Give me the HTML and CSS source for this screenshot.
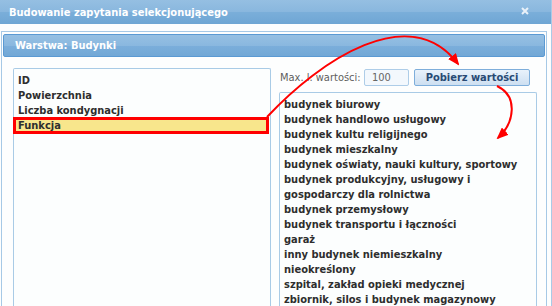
FILE: index.html
```html
<!DOCTYPE html>
<html lang="pl">
<head>
<meta charset="utf-8">
<title>Budowanie zapytania selekcjonującego</title>
<link rel="stylesheet" href="styles.css">
</head>
<body>
<div class="window">
  <div class="titlebar">
    <span class="title">Budowanie zapytania selekcjonującego</span>
    <svg class="close" width="8" height="8" viewBox="0 0 8 8"><path d="M1 1 L7 7 M7 1 L1 7" stroke="#e9f1f9" stroke-width="2"/></svg>
  </div>
  <div class="wbody">
    <div class="panel">
      <div class="phead">Warstwa: Budynki</div>
      <div class="pcontent">
        <div class="listbox">
          <div class="item">ID</div>
          <div class="item">Powierzchnia</div>
          <div class="item">Liczba kondygnacji</div>
          <div class="item sel">Funkcja</div>
        </div>
        <div class="rightcol">
          <div class="toolbar">
            <span class="lbl">Max. l. wartości:</span>
            <input class="num" type="text" value="100">
            <button class="btn">Pobierz wartości</button>
          </div>
          <div class="listbox values">
            <div class="item">budynek biurowy</div>
            <div class="item">budynek handlowo usługowy</div>
            <div class="item">budynek kultu religijnego</div>
            <div class="item">budynek mieszkalny</div>
            <div class="item">budynek oświaty, nauki kultury, sportowy</div>
            <div class="item">budynek produkcyjny, usługowy i gospodarczy dla rolnictwa</div>
            <div class="item">budynek przemysłowy</div>
            <div class="item">budynek transportu i łączności</div>
            <div class="item">garaż</div>
            <div class="item">inny budynek niemieszkalny</div>
            <div class="item">nieokreślony</div>
            <div class="item">szpital, zakład opieki medycznej</div>
            <div class="item">zbiornik, silos i budynek magazynowy</div>
          </div>
        </div>
      </div>
    </div>
  </div>
  <svg class="arrows" width="552" height="306" viewBox="0 0 552 306">
    <defs>
      <marker id="ah" markerUnits="userSpaceOnUse" markerWidth="12" markerHeight="10" refX="10" refY="5" orient="auto">
        <path d="M0 0 L12 5 L0 10 Z" fill="#f00"/>
      </marker>
    </defs>
    <path d="M267 117 C 320 60 410 0 458 64" fill="none" stroke="#f00" stroke-width="2" marker-end="url(#ah)"/>
    <path d="M497 86 C 518 96 515 122 498 138" fill="none" stroke="#f00" stroke-width="2" marker-end="url(#ah)"/>
  </svg>
</div>
</body>
</html>
```
FILE: styles.css
```css
* { box-sizing: border-box; }
html, body { margin: 0; padding: 0; background: #ffffff; }
body { font-family: "DejaVu Sans Condensed", "DejaVu Sans", sans-serif; font-size: 11px; }

.window {
  position: relative;
  width: 552px;
  height: 306px;
  overflow: hidden;
  background: #fdfefe;
  border-right: 1px solid #a9cbe7;
}

.titlebar {
  height: 24px;
  display: flex;
  align-items: center;
  justify-content: space-between;
  padding: 0 22px 0 9px;
  background: linear-gradient(#95bfe2 0%, #89b7de 50%, #7aaed9 52%, #6fa6d4 100%);
}
.title { color: #fff; font-weight: bold; font-size: 11px; }
.close { display: block; margin-top: -2px; }

.wbody { padding: 7px 0 0 1px; }

.panel {
  width: 546px;
  height: 300px;
  border: 1px solid #a6c9e6;
  border-bottom: none;
  padding: 2px 1px 0 1px;
}

.phead {
  height: 23px;
  border: 1px solid #5b9ad3;
  border-radius: 2px;
  padding-left: 11px;
  display: flex;
  align-items: center;
  color: #fff;
  font-weight: bold;
  background: linear-gradient(#96c0e3 0%, #8ab8df 50%, #7baedb 52%, #72a8d6 100%);
}

.pcontent {
  display: grid;
  grid-template-columns: 258px 258px;
  column-gap: 8px;
  padding: 11px 0 0 10px;
}

.listbox {
  height: 260px;
  border: 1px solid #a9cbe6;
  border-bottom: none;
  border-radius: 2px 2px 0 0;
  background: #fcfefe;
  padding-top: 4px;
  color: #2e2e2e;
  font-weight: bold;
  line-height: 15px;
}
.item { padding-left: 4px; }
.listbox .item.sel {
  margin-right: 2px;
  background: #f8e68c;
  outline: 3px solid #ff0000;
  outline-offset: -2px;
}

.rightcol { display: flex; flex-direction: column; row-gap: 6px; }
.toolbar { display: flex; align-items: center; height: 18px; }
.lbl { color: #5f5f5f; padding-left: 1px; width: 85px; }
.num {
  width: 45px;
  height: 17px;
  border: 1px solid #aecde8;
  border-radius: 2px;
  background: #f3f8fd;
  color: #666;
  font-family: inherit;
  font-size: 11px;
  padding: 0 0 0 7px;
  margin: 0;
}
.btn {
  margin: 1px 0 0 5px;
  width: 116px;
  height: 17px;
  padding: 0;
  border: 1px solid #7eaedb;
  border-radius: 2px;
  background: linear-gradient(#e9f2fb, #cddff1);
  color: #284a74;
  font-family: inherit;
  font-size: 11px;
  font-weight: bold;
}
.values { padding-right: 4px; }

.arrows { position: absolute; left: 0; top: 0; pointer-events: none; }
```
